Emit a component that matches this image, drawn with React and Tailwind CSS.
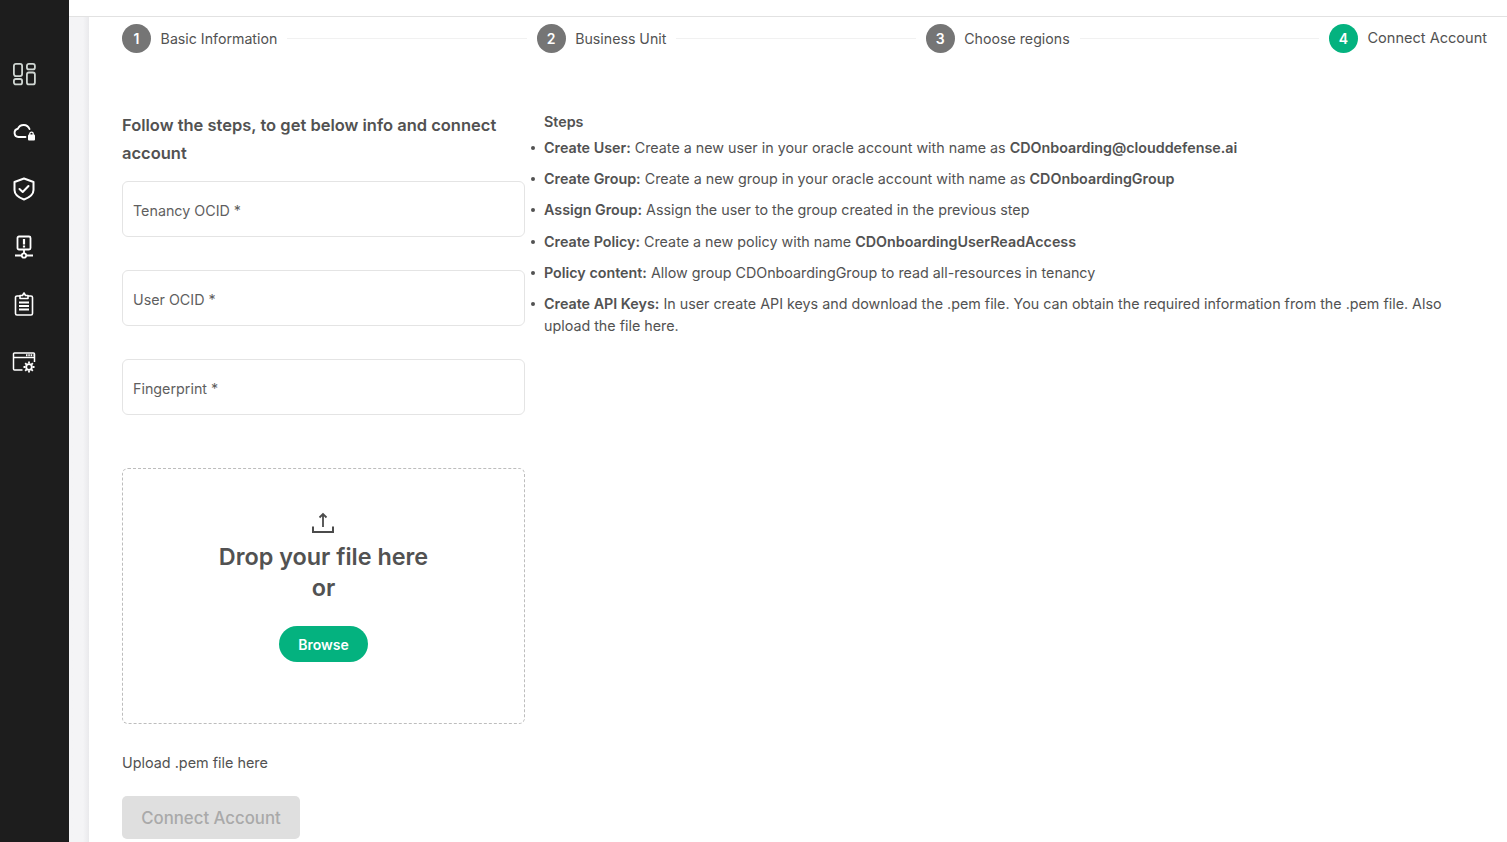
import React from 'react';

const font = { fontFamily: 'Inter, sans-serif' };

const stepsTop = [
  { n: 1, label: 'Basic Information' },
  { n: 2, label: 'Business Unit' },
  { n: 3, label: 'Choose regions' },
];

const fields = ['Tenancy OCID *', 'User OCID *', 'Fingerprint *'];

const instructions = [
  { b: 'Create User:', t: ' Create a new user in your oracle account with name as ', e: 'CDOnboarding@clouddefense.ai' },
  { b: 'Create Group:', t: ' Create a new group in your oracle account with name as ', e: 'CDOnboardingGroup' },
  { b: 'Assign Group:', t: ' Assign the user to the group created in the previous step' },
  { b: 'Create Policy:', t: ' Create a new policy with name ', e: 'CDOnboardingUserReadAccess' },
  { b: 'Policy content:', t: ' Allow group CDOnboardingGroup to read all-resources in tenancy' },
  { b: 'Create API Keys:', t: ' In user create API keys and download the .pem file. You can obtain the required information from the .pem file. Also upload the file here.' },
];

function SideIcons() {
  return (
    <div className="flex w-6 flex-col items-center gap-[33.6px] text-white">
      {/* dashboard */}
      <svg width="24" height="24" viewBox="0 0 24 24" fill="none" stroke="#cfd6d2" strokeWidth="1.8">
        <rect x="1.900" y="1.900" width="8.200" height="12.200" rx="2" />
        <rect x="14.900" y="1.900" width="8" height="5.500" rx="2" />
        <rect x="1.900" y="17" width="8.200" height="5.400" rx="2" />
        <rect x="14.900" y="10.500" width="8" height="11.900" rx="2" />
      </svg>
      {/* cloud lock */}
      <svg width="24" height="24" viewBox="0 0 24 24" fill="none" stroke="white" strokeWidth="1.900">
        <path d="M13.500 17H6.500a4.200 4.200 0 0 1-.6-8.300A6.300 6.300 0 0 1 17.500 9" strokeLinecap="round" />
        <rect x="16" y="14.500" width="7" height="6" rx="1" fill="white" stroke="none" />
        <path d="M17.800 15v-1.200a1.700 1.700 0 0 1 3.400 0V15" strokeWidth="1.300" />
      </svg>
      {/* shield check */}
      <svg width="24" height="24" viewBox="0 0 24 24" fill="none" stroke="white" strokeWidth="2">
        <path d="M12 1.500 21.500 5v8c0 4.500-4 7.500-9.500 9.500C6.500 20.500 2.500 17.500 2.500 13V5z" strokeLinejoin="round" />
        <path d="m7.500 12 3.200 3 5.800-6" strokeLinecap="round" strokeLinejoin="round" />
      </svg>
      {/* monitor alert */}
      <svg width="24" height="24" viewBox="0 0 24 24" fill="none" stroke="white" strokeWidth="1.800">
        <rect x="5.500" y="1.500" width="13" height="13" rx="1.500" />
        <path d="M12 4v5.500M12 10.500v2" strokeWidth="2.200" />
        <path d="M12 14.500V18M3 20.500h6.500M14.500 20.500H21" />
        <circle cx="12" cy="20.500" r="2.200" />
      </svg>
      {/* clipboard */}
      <svg width="24" height="24" viewBox="0 0 24 24" fill="none" stroke="white" strokeWidth="1.600">
        <path d="M8 4H5a1.500 1.500 0 0 0-1.500 1.500v16A1.500 1.500 0 0 0 5 23h14a1.500 1.500 0 0 0 1.500-1.500v-16A1.500 1.500 0 0 0 19 4h-3" />
        <path d="M8 6.500V3.500h2.500L12 1l1.500 2.500H16v3z" strokeLinejoin="round" />
        <path d="M7 10.500h10M7 14h10M7 17.500h10" strokeWidth="1.800" />
      </svg>
      {/* window settings */}
      <svg width="24" height="24" viewBox="0 0 24 24" fill="none" stroke="white" strokeWidth="1.500">
        <path d="M10.500 20H2.500A1 1 0 0 1 1.500 19V4A1 1 0 0 1 2.500 3h19a1 1 0 0 1 1 1v8" />
        <path d="M1.500 7.500h21" />
        <path d="M14 5.200h7.500" strokeWidth="2" strokeDasharray="1.500 .8" />
        <circle cx="17" cy="17" r="2.800" strokeWidth="1.800" />
        <path d="M17 11.500v2M17 20.500v2M11.500 17h2M20.500 17h2M13.200 13.200l1.400 1.400M19.400 19.400l1.400 1.400M13.200 20.800l1.400-1.400M19.400 14.600l1.400-1.400" strokeWidth="1.800" />
      </svg>
    </div>
  );
}

function UploadIcon() {
  return (
    <svg width="24" height="24" viewBox="0 0 24 24" fill="none" stroke="#4b4b4b" strokeWidth="2" className="mr-px">
      <path d="M12 16V3.500M8.500 6.500 12 3l3.500 3.500" strokeWidth="1.800" />
      <path d="M2 15.500V21h20v-5.500" />
    </svg>
  );
}

function StepItem({ n, label, active }) {
  return (
    <div className="flex items-center">
      <div className={`flex h-[29px] w-[29px] shrink-0 items-center justify-center rounded-full text-sm font-semibold text-white ${active ? 'bg-[#04b27f]' : 'bg-[#757575]'}`}>
        {n}
      </div>
      <span className={`ml-[9.6px] whitespace-nowrap font-[430] ${active ? 'text-[14.55px]' : 'text-[14.2px]'}`}>{label}</span>
    </div>
  );
}

export default function App() {
  return (
    <div className="flex h-[842px] overflow-hidden bg-white text-[#525252]" style={font}>
      <aside className="flex h-full w-[69px] shrink-0 flex-col bg-[#1d1d1d] pl-[12px] pt-[62px]">
        <SideIcons />
      </aside>

      <div className="flex min-w-0 flex-1 flex-col">
        <div className="h-[17px] shrink-0 border-b border-[#e2e2e2] bg-white" />
        <div className="flex min-h-0 flex-1">
          <div className="w-[20px] shrink-0 bg-gradient-to-r from-[#f4f4f6] from-70% to-[#e9e9ec]" />

          <main className="min-w-0 flex-1 bg-white pl-[33px] pr-[20px] pt-[7px]">
            {/* stepper */}
            <div className="flex items-center">
              {stepsTop.map((s) => (
                <React.Fragment key={s.n}>
                  <StepItem n={s.n} label={s.label} />
                  <div className="mx-[10px] h-px flex-1 bg-[#f1f1f1]" />
                </React.Fragment>
              ))}
              <StepItem n={4} label="Connect Account" active />
            </div>

            <div className="mt-[58px] flex">
              {/* left column */}
              <div className="w-[403px] shrink-0">
                <h2 className="text-[16.5px] font-semibold leading-[28px]">Follow the steps, to get below info and connect account</h2>
                <div className="mt-[14px] flex flex-col gap-[33px]">
                  {fields.map((f) => (
                    <div key={f} className="flex h-[56px] items-center rounded-md border border-[#e4e4e4] px-[10px] pt-[4px] text-[14.3px] text-[#5f5f5f]">
                      {f}
                    </div>
                  ))}
                </div>

                <div className="mt-[53px] flex h-[256px] flex-col items-center rounded-md border border-dashed border-[#bdbdbd] pt-[42px]">
                  <UploadIcon />
                  <div className="mt-[6px] text-[23.4px] font-semibold leading-[31px]">Drop your file here</div>
                  <div className="text-[23.4px] font-semibold leading-[31px]">or</div>
                  <button className="mt-[23px] h-[36px] w-[89px] rounded-full bg-[#04b27f] pt-[2px] text-sm font-semibold text-white">Browse</button>
                </div>

                <p className="mt-[30px] text-[14.4px] leading-[17px]">Upload .pem file here</p>
                <button className="mt-[25px] h-[43px] w-[178px] rounded-[5px] bg-[#dfdfdf] pt-[2px] text-[16.8px] font-medium text-[#a9a9a9]">Connect Account</button>
              </div>

              {/* right column */}
              <div className="min-w-0 flex-1 pl-[19px] pt-[2px] text-[14.3px]">
                <h3 className="font-semibold leading-[17px]">Steps</h3>
                <ul className="mt-[7px] flex flex-col gap-[9.2px] font-[430] leading-[22px]">
                  {instructions.map((i) => (
                    <li key={i.b} className="relative">
                      <span className="absolute left-[-13px] top-[9px] h-1 w-1 rounded-full bg-[#525252]" />
                      <span className="font-semibold">{i.b}</span>
                      {i.t}
                      {i.e && <span className="font-semibold">{i.e}</span>}
                    </li>
                  ))}
                </ul>
              </div>
            </div>
          </main>
        </div>
      </div>
    </div>
  );
}
